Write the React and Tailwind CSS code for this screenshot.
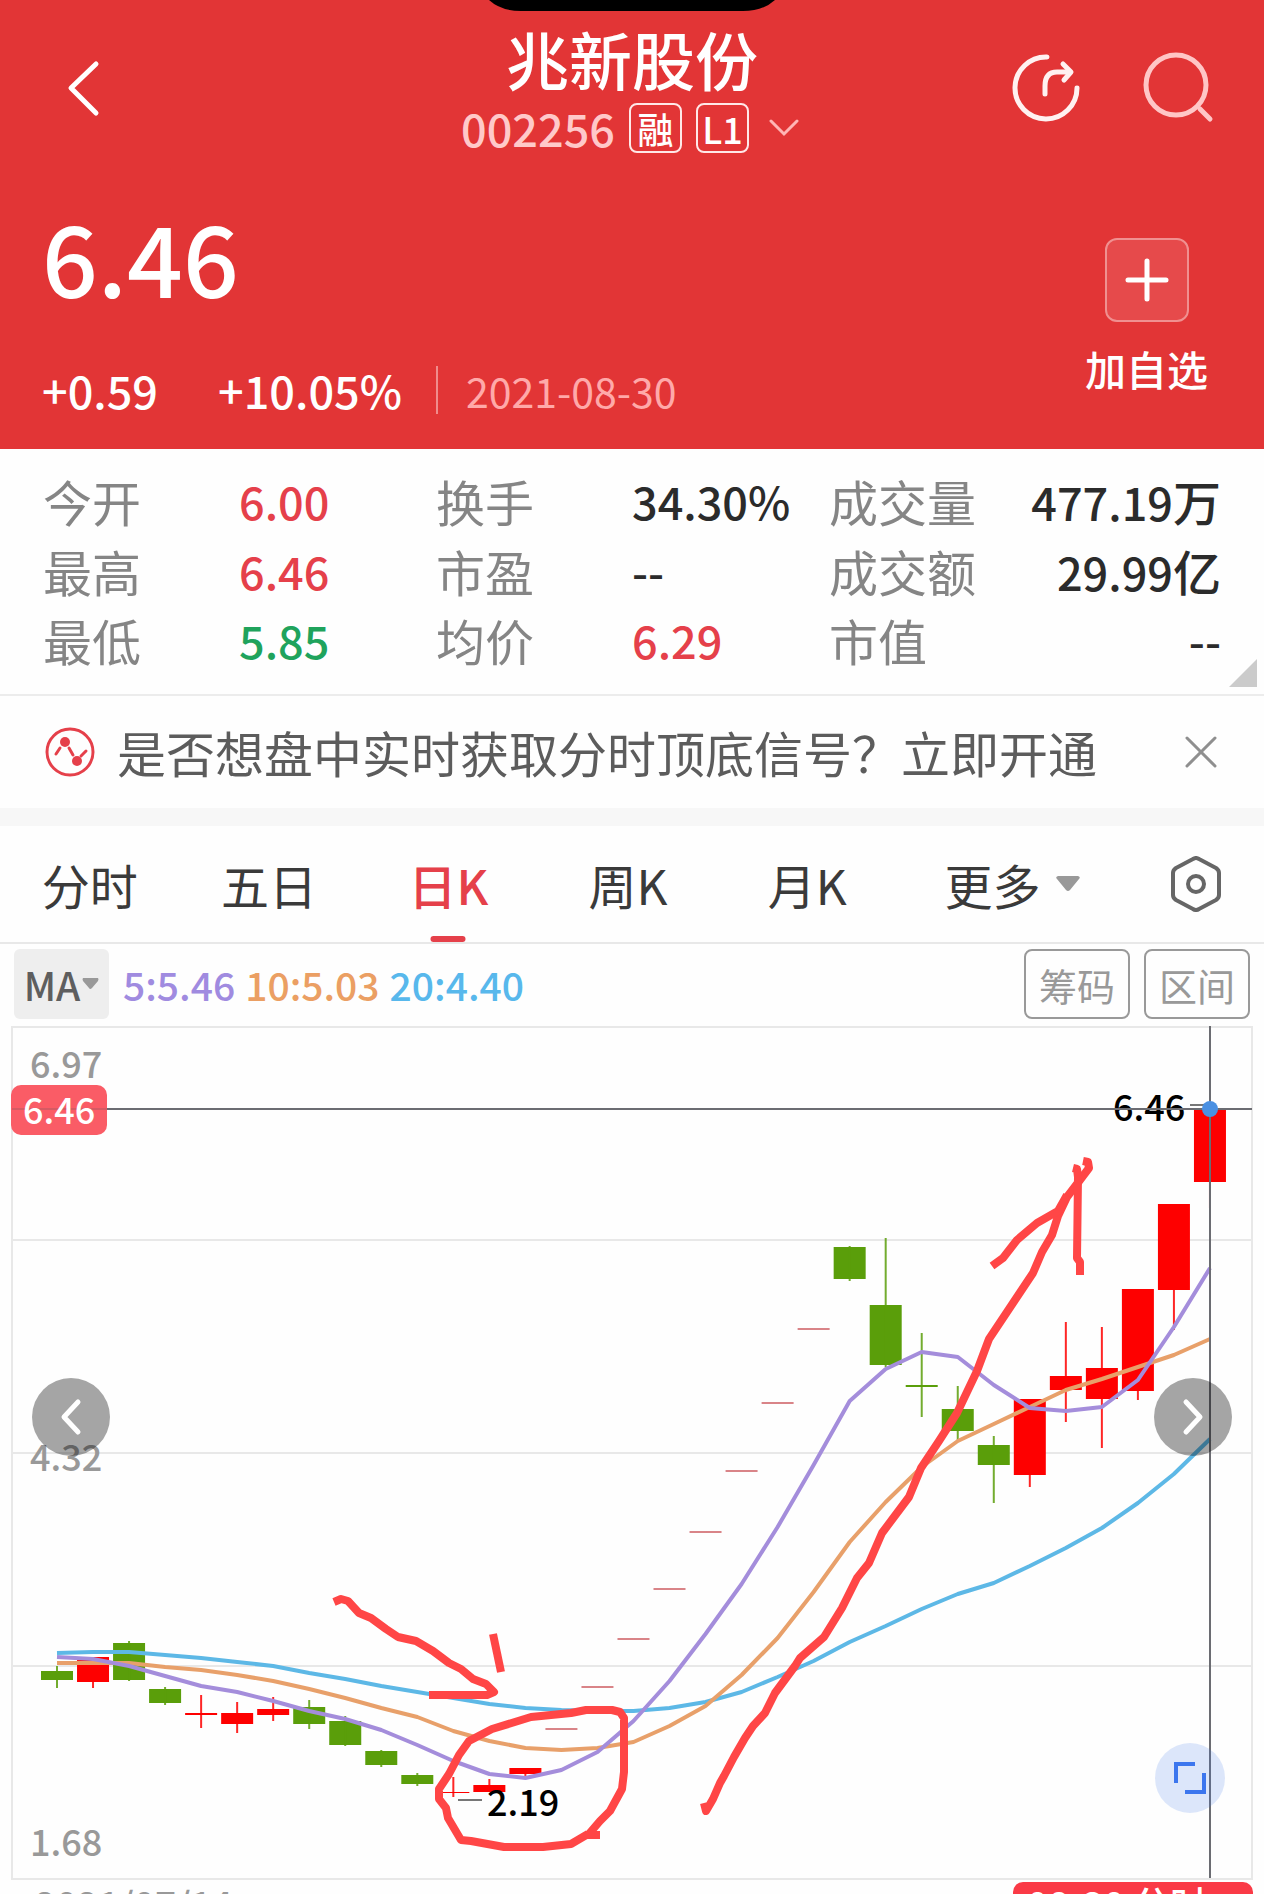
import React, { useState } from "react";

// quote summary, one row per line of the panel
const quotes = [
  [
    { label: "今开", value: "6.00", color: "text-[#e5404a]" },
    { label: "换手", value: "34.30%", color: "text-[#2b2b2b]" },
    { label: "成交量", value: "477.19", unit: "万", color: "text-[#2b2b2b]" },
  ],
  [
    { label: "最高", value: "6.46", color: "text-[#e5404a]" },
    { label: "市盈", value: "--", color: "text-[#2b2b2b]" },
    { label: "成交额", value: "29.99", unit: "亿", color: "text-[#2b2b2b]" },
  ],
  [
    { label: "最低", value: "5.85", color: "text-[#1fa35c]" },
    { label: "均价", value: "6.29", color: "text-[#e5404a]" },
    { label: "市值", value: "--", color: "text-[#2b2b2b]" },
  ],
];

const periods = ["分时", "五日", "日K", "周K", "月K"];

const averages = [
  { text: "5:5.46", color: "text-[#a08be0]" },
  { text: "10:5.03", color: "text-[#eb9f63]" },
  { text: "20:4.40", color: "text-[#58b8ec]" },
];

// candles in chart units: [body top, body bottom, wick top, wick bottom, colour]
const candles = [
  [645, 654, 640, 662, "g"],
  [631, 656, 631, 662, "r"],
  [617, 654, 615, 655, "g"],
  [663, 677, 661, 679, "g"],
  [687, 689, 669, 702, "r"],
  [687, 698, 676, 707, "r"],
  [683, 689, 671, 695, "r"],
  [681, 698, 674, 703, "g"],
  [695, 719, 690, 720, "g"],
  [725, 739, 724, 741, "g"],
  [749, 758, 747, 760, "g"],
  [766, 767, 751, 771, "r"],
  [759, 766, 753, 766, "r"],
  [742, 748, 742, 750, "r"],
  [702, 704, 702, 704, "d"],
  [660, 662, 660, 662, "d"],
  [612, 614, 612, 614, "d"],
  [562, 564, 562, 564, "d"],
  [505, 507, 505, 507, "d"],
  [444, 446, 444, 446, "d"],
  [376, 378, 376, 378, "d"],
  [302, 304, 302, 304, "d"],
  [221, 253, 220, 255, "g"],
  [279, 339, 212, 341, "g"],
  [359, 361, 307, 391, "g"],
  [383, 405, 360, 414, "g"],
  [419, 439, 410, 477, "g"],
  [373, 449, 373, 461, "r"],
  [350, 364, 296, 396, "r"],
  [342, 373, 301, 422, "r"],
  [263, 365, 263, 374, "r"],
  [178, 264, 178, 304, "r"],
  [83, 156, 83, 182, "r"],
];

const candleColors = { r: "#fe0000", g: "#5a9e0a", d: "#d98488" };

const ma5 = [631, 633, 640, 650, 660, 666, 675, 685, 693, 704, 719, 735, 748, 752, 744, 726, 695, 655, 608, 558, 501, 439, 375, 343, 326, 331, 359, 382, 385, 381, 354, 301, 242];
const ma10 = [637, 637, 637, 641, 644, 649, 655, 663, 672, 682, 691, 705, 715, 722, 724, 722, 716, 700, 680, 649, 612, 566, 516, 476, 441, 415, 398, 381, 364, 353, 341, 329, 313];
const ma20 = [627, 626, 626, 629, 632, 636, 640, 647, 653, 660, 666, 672, 678, 682, 684, 685, 685, 682, 676, 666, 651, 635, 616, 600, 583, 568, 557, 540, 522, 502, 477, 448, 413];

const xAt = (i) => 57 + i * 36.03;
const toPoints = (list) => list.map((y, i) => `${xAt(i).toFixed(1)},${y}`).join(" ");

const Header = () => (
  <header className="relative bg-[#e23536] text-white px-[42px] pt-[26px] pb-[35px]">
    <div className="absolute top-0 left-1/2 -translate-x-1/2 h-[11px] w-[286px] overflow-hidden">
      <svg viewBox="0 0 286 11" className="w-full h-full">
        <path d="M0 0H286Q274 11 254 11H32Q12 11 0 0Z" fill="#000" />
      </svg>
    </div>

    <div className="grid grid-cols-[1fr_auto_1fr] items-start">
      <button aria-label="返回" className="justify-self-start pt-[33px] pl-6">
        <svg width="36" height="60" viewBox="0 0 36 60" fill="none" stroke="currentColor" strokeWidth="5" strokeLinecap="round" strokeLinejoin="round">
          <path d="M30 5L5 29L30 54" />
        </svg>
      </button>

      <div className="flex flex-col items-center">
        <h1 className="text-[63px] leading-[64px] font-medium">兆新股份</h1>
        <div className="mt-3 mr-1 flex items-center h-[52px]">
          <span className="text-[45px] leading-[50px] font-medium text-[#ffc9c9] mr-[14px]">002256</span>
          <span className="w-[53px] h-[50px] border-2 border-[#ffe8e8] rounded-lg flex items-center justify-center text-4xl font-medium mr-[14px]">融</span>
          <span className="w-[53px] h-[50px] border-2 border-[#ffe8e8] rounded-lg flex items-center justify-center text-4xl font-medium mr-[20px]">L1</span>
          <svg width="30" height="18" viewBox="0 0 30 18" fill="none" stroke="#ffb5b5" strokeWidth="3" strokeLinecap="round">
            <path d="M2 2L15 15L28 2" />
          </svg>
        </div>
      </div>

      <div className="justify-self-end flex items-start pt-6 pr-2">
        <button aria-label="分享" className="mr-[60px]">
          <svg width="72" height="76" viewBox="0 0 72 76" fill="none" stroke="#fff1f1" strokeWidth="5" strokeLinecap="round" strokeLinejoin="round">
            <path d="M37 7A31 31 0 1 0 67 38" />
            <path d="M35 44V36Q35 22 47 22H60" />
            <path d="M53 14L61 22L54 30" />
          </svg>
        </button>
        <button aria-label="搜索">
          <svg width="72" height="76" viewBox="0 0 72 76" fill="none" stroke="#ffc6c6" strokeWidth="5" strokeLinecap="round">
            <circle cx="34" cy="35" r="30" />
            <path d="M58 59L68 69" />
          </svg>
        </button>
      </div>
    </div>

    <div className="flex justify-between">
      <div className="mt-[51px]">
        <div className="text-[98px] leading-[100px] font-medium">6.46</div>
        <div className="mt-[61px] flex items-center h-12 text-[45px] leading-[48px] font-medium">
          <span className="mr-[60px]">+0.59</span>
          <span className="mr-[34px]">+10.05%</span>
          <span className="w-[2px] h-12 bg-[#f08c8c] mr-[28px]"></span>
          <span className="text-[41px] font-normal text-[#ffa9a9]">2021-08-30</span>
        </div>
      </div>
      <button className="mt-[84px] mr-[14px] flex flex-col items-center">
        <span className="w-[84px] h-[84px] rounded-xl border-2 border-[#f09090] bg-[#e64a4b] flex items-center justify-center">
          <svg width="46" height="46" viewBox="0 0 46 46" stroke="currentColor" strokeWidth="5" strokeLinecap="round">
            <path d="M23 4V42M4 23H42" />
          </svg>
        </span>
        <span className="mt-5 text-[41px] leading-[52px] font-medium">加自选</span>
      </button>
    </div>
  </header>
);

const QuotePanel = () => (
  <section className="relative border-b-2 border-[#ececec] pt-[16px] pb-[19px] px-[43px]">
    {quotes.map((row, index) => (
      <dl key={index} className="grid grid-cols-[196px_197px_196px_197px_1fr_auto] items-center h-[70px]">
        {row.map((item) => (
          <React.Fragment key={item.label}>
            <dt className="text-[49px] leading-[70px] text-[#858585]">{item.label}</dt>
            <dd className={`text-[45px] leading-[70px] font-medium whitespace-nowrap last:text-right ${item.color}`}>
              {item.value}
              {item.unit && <span className="text-[48px]">{item.unit}</span>}
            </dd>
          </React.Fragment>
        ))}
      </dl>
    ))}
    <svg className="absolute right-[7px] bottom-[7px]" width="28" height="28" viewBox="0 0 28 28">
      <path d="M28 0V28H0Z" fill="#cbcbcb" />
    </svg>
  </section>
);

const Notice = () => (
  <section className="flex items-center h-[112px] pl-[45px] pr-[45px]">
    <svg width="50" height="50" viewBox="0 0 50 50" fill="none" stroke="#e5404a" strokeWidth="3" strokeLinecap="round">
      <circle cx="25" cy="25" r="23" />
      <path d="M11 27L15 21M24 21L28 28M36 29L41 24" />
      <circle cx="20" cy="15" r="5" fill="#e5404a" stroke="none" />
      <circle cx="32" cy="34" r="5" fill="#e5404a" stroke="none" />
    </svg>
    <a href="#open" className="ml-[22px] text-[49px] leading-[60px] text-[#5c5c5c] whitespace-nowrap">
      是否想盘中实时获取分时顶底信号？立即开通
    </a>
    <button aria-label="关闭" className="ml-auto">
      <svg width="36" height="36" viewBox="0 0 36 36" stroke="#8f8f8f" strokeWidth="3" strokeLinecap="round">
        <path d="M4 4L32 32M32 4L4 32" />
      </svg>
    </button>
  </section>
);

const PeriodTabs = () => {
  const [active, setActive] = useState("日K");

  return (
    <nav className="grid grid-cols-[repeat(5,1fr)_231px_136px] h-[118px] border-b-2 border-[#e8e8e8] text-[48px] text-[#3a3a3a]">
      {periods.map((name) => (
        <button
          key={name}
          onClick={() => setActive(name)}
          className={`relative flex items-center justify-center ${active === name ? "font-medium text-[#e5404a]" : ""}`}
        >
          {name}
          {active === name && (
            <span className="absolute bottom-0 left-1/2 -translate-x-1/2 w-[35px] h-[6px] rounded-full bg-[#e5404a]"></span>
          )}
        </button>
      ))}
      <button className="flex items-center justify-center gap-4">
        更多
        <svg width="24" height="16" viewBox="0 0 24 16">
          <path d="M2 0H22Q25 1 23 3L14 14Q12 16 10 14L1 3Q-1 1 2 0Z" fill="#999" />
        </svg>
      </button>
      <button aria-label="设置" className="flex items-center justify-center">
        <svg width="52" height="56" viewBox="0 0 52 56" fill="none" stroke="#666" strokeWidth="4" strokeLinejoin="round">
          <path d="M23 3Q26 1 29 3L46 12Q49 14 49 17V39Q49 42 46 44L29 53Q26 55 23 53L6 44Q3 42 3 39V17Q3 14 6 12Z" />
          <circle cx="26" cy="28" r="8" />
        </svg>
      </button>
    </nav>
  );
};

const IndicatorBar = () => (
  <div className="flex items-center pl-[14px] pr-[14px] pt-[5px] pb-[7px]">
    <button className="h-[70px] w-[95px] rounded-md bg-[#eee] flex items-center justify-center gap-[2px] text-[39px] font-medium text-[#5e5e5e]">
      MA
      <svg width="17" height="12" viewBox="0 0 17 12">
        <path d="M1 0H16Q17 1 16 3L10 10Q8 12 7 10L1 3Q0 1 1 0Z" fill="#999" />
      </svg>
    </button>
    <div className="ml-[14px] flex gap-[10px] text-[39px] leading-[68px] font-medium">
      {averages.map((avg) => (
        <span key={avg.text} className={avg.color}>{avg.text}</span>
      ))}
    </div>
    <div className="ml-auto flex gap-[14px] text-[38px] text-[#999]">
      <button className="h-[70px] w-[106px] rounded-lg border-2 border-[#999]">筹码</button>
      <button className="h-[70px] w-[106px] rounded-lg border-2 border-[#999]">区间</button>
    </div>
  </div>
);

const KLineChart = () => (
  <div className="relative">
    <svg viewBox="0 0 1264 854" className="block w-full h-auto" fontSize="36">
      {/* frame and grid */}
      <rect x="12" y="1" width="1240" height="852" fill="#fefefe" stroke="#e8e8e8" strokeWidth="2" />
      <path d="M12 214H1252M12 427H1252M12 640H1252" stroke="#e8e8e8" strokeWidth="2" />

      <g fill="#999" fontWeight="500">
        <text x="30" y="52">6.97</text>
        <text x="30" y="445">4.32</text>
        <text x="30" y="830">1.68</text>
      </g>

      {/* candles */}
      {candles.map(([top, bottom, high, low, kind], i) => (
        <g key={i} fill={candleColors[kind]}>
          <rect x={xAt(i) - 16} y={top} width="32" height={bottom - top} />
          <rect x={xAt(i) - 1} y={high} width="2" height={low - high} opacity="0.85" />
        </g>
      ))}

      {/* moving averages */}
      <g fill="none" strokeWidth="4" strokeLinejoin="round">
        <polyline points={toPoints(ma20)} stroke="#5db8e6" />
        <polyline points={toPoints(ma10)} stroke="#e8a06a" />
        <polyline points={toPoints(ma5)} stroke="#a48ddb" />
      </g>

      <path d="M458 774H482M1190 79H1206" stroke="#777" strokeWidth="2" />
      <g fill="#000" fontWeight="500">
        <text x="487" y="790">2.19</text>
        <text x="1113" y="95">6.46</text>
      </g>

      {/* hand-drawn marks */}
      <g fill="none" stroke="#ff4646" strokeWidth="8" strokeLinejoin="round">
        <path d="M334 576L341 573L348 575L359 587L371 592L386 603L398 611L416 615L433 625L449 637L461 643L473 653L486 658L494 666L487 669H429" />
        <path d="M493 608L497 627L501 646" />
        <path d="M600 809H588L600 795L610 785L622 763L624 746V692L620 686L612 684H586L571 687L531 691L492 703L469 715L459 729L449 748L439 763V773L446 782L448 792L461 814L471 815L504 821H543L571 818L588 808" />
        <path d="M704 777L706 785L713 773L720 757L724 750L734 731L745 712L753 700L765 687L775 667L795 640L800 632L824 611L842 582L857 552L869 537L882 507L909 471L921 442L939 415L957 387L977 345L989 313L1013 277L1033 247L1042 226L1052 209L1058 190L1067 171L1080 154L1089 142L1088 136L1083 135" />
        <path d="M992 240L1003 232L1017 214L1037 197L1058 185L1067 169" />
        <path d="M1073 142L1077 143L1078 151L1077 232L1080 236V249" />
      </g>

      {/* crosshair */}
      <path d="M12 83H1252M1210 0V852" stroke="#6b6c72" strokeWidth="2" />
      <circle cx="1210" cy="83" r="8" fill="#4a90e2" />
      <rect x="11" y="59" width="96" height="50" rx="10" fill="#fa5c66" />
      <path d="M12 83H107" stroke="#d65a63" strokeWidth="2" />
      <text x="23" y="98" fill="#fff" fontWeight="500">6.46</text>
    </svg>

    <button aria-label="上一页" className="absolute left-8 top-[41.2%] size-[78px] rounded-full bg-black/35 flex items-center justify-center">
      <svg width="24" height="38" viewBox="0 0 24 38" fill="none" stroke="#fff" strokeWidth="5" strokeLinecap="round" strokeLinejoin="round">
        <path d="M19 4L5 19L19 34" />
      </svg>
    </button>
    <button aria-label="下一页" className="absolute right-8 top-[41.2%] size-[78px] rounded-full bg-black/35 flex items-center justify-center">
      <svg width="24" height="38" viewBox="0 0 24 38" fill="none" stroke="#fff" strokeWidth="5" strokeLinecap="round" strokeLinejoin="round">
        <path d="M5 4L19 19L5 34" />
      </svg>
    </button>
    <button aria-label="全屏" className="absolute right-[39px] top-[84%] size-[70px] rounded-full bg-[#4478e8]/18 flex items-center justify-center">
      <svg width="34" height="34" viewBox="0 0 34 34" fill="none" stroke="#3c76ee" strokeWidth="4">
        <path d="M3 22V3H22M31 12V31H12" />
      </svg>
    </button>
  </div>
);

const App = () => {
  return (
    <div className="h-screen overflow-hidden bg-[#fefefe] font-['Noto_Sans_CJK_SC',sans-serif]">
      <Header />
      <QuotePanel />
      <Notice />
      <div className="h-[18px] bg-[#f7f7f7]"></div>
      <PeriodTabs />
      <IndicatorBar />
      <KLineChart />

      {/* time axis */}
      <div className="flex items-start justify-between pl-[35px] pr-[11px] pt-[2px] text-[37px] leading-[42px] font-medium">
        <span className="text-[#999]">2021/07/14</span>
        <span className="rounded-t-[10px] bg-[#fa3a46] pl-[14px] pr-[46px] text-white">08-30 分时</span>
      </div>
    </div>
  );
};

export default App;
